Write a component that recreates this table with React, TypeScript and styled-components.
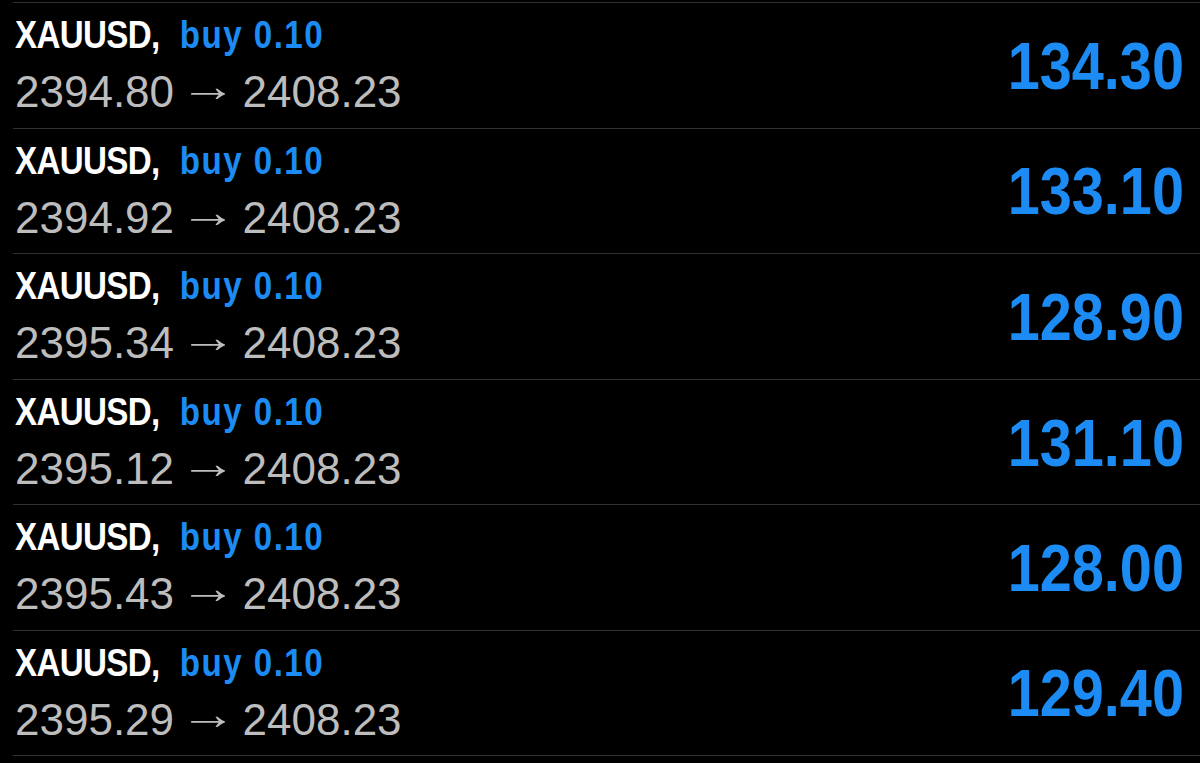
import { createGlobalStyle, styled } from 'styled-components'

const GlobalStyle = createGlobalStyle`
    html, body {
        margin: 0;
        padding: 0;
        background: #000;
    }
    body {
        font-family: "Liberation Sans", Arial, sans-serif;
    }
`

const trades = [
    { open: '2394.80', close: '2408.23', profit: '134.30' },
    { open: '2394.92', close: '2408.23', profit: '133.10' },
    { open: '2395.34', close: '2408.23', profit: '128.90' },
    { open: '2395.12', close: '2408.23', profit: '131.10' },
    { open: '2395.43', close: '2408.23', profit: '128.00' },
    { open: '2395.29', close: '2408.23', profit: '129.40' },
]

const Screen = styled.div`
    width: 1200px;
    height: 763px;
    background: #000;
    padding-top: 2px;
    box-sizing: border-box;
    overflow: hidden;
`

const Row = styled.div`
    display: flex;
    justify-content: space-between;
    align-items: center;
    height: 125.6px;
    box-sizing: border-box;
    margin-left: 13px;
    padding: 0 16px 0 2px;
    border-top: 1px solid #303030;

    &:last-child {
        border-bottom: 1px solid #303030;
    }
`

const Info = styled.div`
    align-self: flex-start;
    display: flex;
    flex-direction: column;
    padding-top: 12px;
    width: 420px;
`

// condensed look: the title is drawn wide then squeezed
const Title = styled.div`
    font-size: 39px;
    line-height: 40px;
    font-weight: bold;
    color: #fff;
    white-space: nowrap;
    transform: scaleX(0.85);
    transform-origin: left center;
`

const Symbol = styled.span`
    letter-spacing: -0.8px;
`

const Side = styled.span`
    color: #1c8cf4;
    margin-left: 24px;
    letter-spacing: 1.7px;
`

const Prices = styled.div`
    margin-top: 12px;
    font-size: 44px;
    line-height: 50px;
    color: #bdbdbd;
    white-space: nowrap;
`

const Arrow = styled.span`
    display: inline-block;
    transform: translateY(-6px) scaleX(1.3);
`

const Profit = styled.div`
    font-size: 67px;
    font-weight: bold;
    color: #1c8cf4;
    transform: scaleX(0.86);
    transform-origin: right center;
`

const App = () => {
    return (
        <Screen>
            <GlobalStyle />
            {trades.map((t, i) => (
                <Row key={i}>
                    <Info>
                        <Title>
                            <Symbol>XAUUSD,</Symbol>
                            <Side>buy 0.10</Side>
                        </Title>
                        <Prices>
                            {t.open} <Arrow>→</Arrow> {t.close}
                        </Prices>
                    </Info>
                    <Profit>{t.profit}</Profit>
                </Row>
            ))}
        </Screen>
    )
}

export default App
